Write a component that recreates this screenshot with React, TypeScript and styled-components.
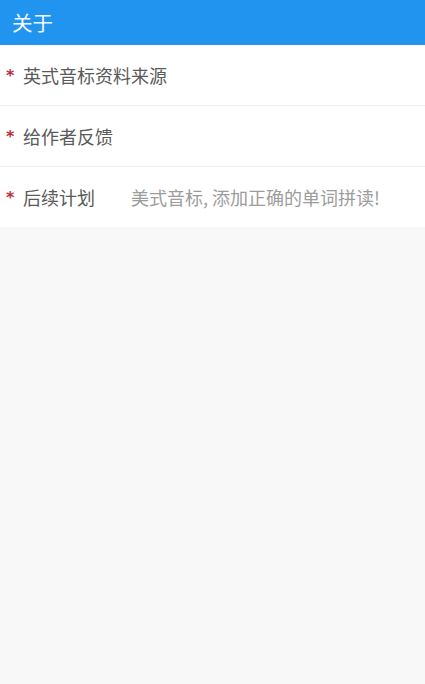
import styled, { createGlobalStyle } from "styled-components";

const GlobalStyle = createGlobalStyle`
  html, body {
    margin: 0;
    padding: 0;
    background: #f8f8f8;
    font-family: "Noto Sans CJK SC", "Noto Sans", sans-serif;
  }
`;

const items = [
  { label: "英式音标资料来源", note: "" },
  { label: "给作者反馈", note: "" },
  { label: "后续计划", note: "美式音标, 添加正确的单词拼读!" },
];

export default function App() {
  return (
    <Page>
      <GlobalStyle />
      <Header>关于</Header>
      <List>
        {items.map((item, index) => {
          return (
            <Row key={index}>
              <Star>*</Star>
              <Label $wide={!item.note}>{item.label}</Label>
              {item.note && <Note>{item.note}</Note>}
            </Row>
          );
        })}
      </List>
    </Page>
  );
}

const Page = styled.div`
  width: 425px;
  min-height: 684px;
  background: #f8f8f8;
`;

const Header = styled.div`
  height: 45px;
  display: flex;
  align-items: center;
  padding: 0 12px 2px;
  background: #2094ee;
  color: #f4f9ff;
  font-size: 20.5px;
  line-height: 20px;
  box-sizing: border-box;
`;

const List = styled.div`
  background: #ffffff;
`;

const Row = styled.div`
  height: 60px;
  display: flex;
  align-items: center;
  padding: 0 6px;
  border-bottom: 1px solid #f3f3f3;

  &:last-child {
    border-bottom: none;
  }
`;

const Star = styled.span`
  width: 17px;
  color: #b8303c;
  font-family: "DejaVu Sans", sans-serif;
  font-size: 16px;
  font-weight: 700;
  line-height: 16px;
  padding-top: 2px;
`;

const Label = styled.span<{ $wide: boolean }>`
  width: ${(p) => (p.$wide ? "auto" : "108px")};
  color: #5a5a5a;
  font-size: 18px;
  line-height: 20px;
`;

const Note = styled.span`
  color: #9c9c9c;
  font-size: 18px;
  line-height: 20px;
`;
